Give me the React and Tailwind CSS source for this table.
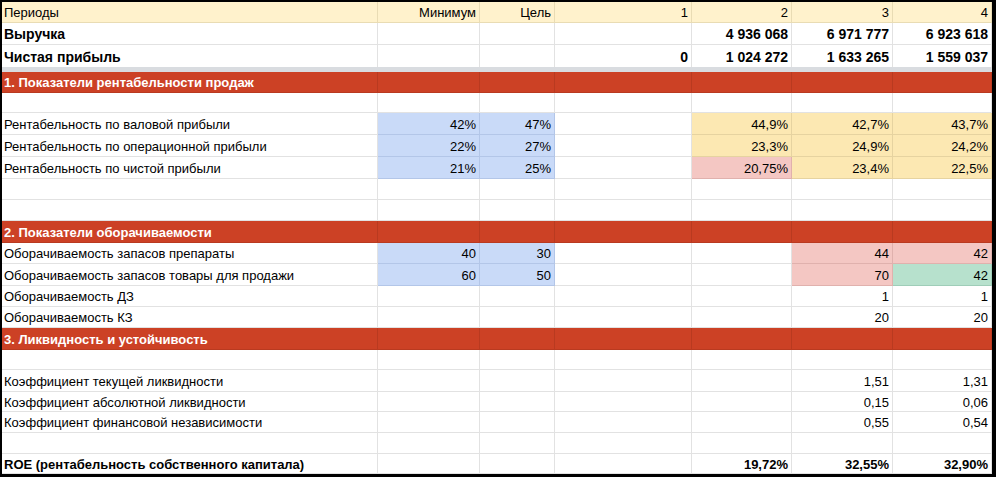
import React from "react";

const COLS = "grid-cols-[376px_102px_75px_137px_100px_101px_99px]";

// cell fill codes: b = blue target, y = yellow, r = pink (bad), g = green (good)
const FILL = {
  b: "bg-[#c9daf8] border-[#b3c6e8]",
  y: "bg-[#fce8b2] border-[#e6d3a0]",
  r: "bg-[#f4c7c3] border-[#e0b1ad]",
  g: "bg-[#b7e1cd] border-[#9fcdb8]",
};

const sheet = [
  { kind: "section", h: 21, title: "1. Показатели рентабельности продаж" },
  { kind: "data", h: 20, cells: ["", "", "", "", "", "", ""] },
  { kind: "data", h: 22, cells: ["Рентабельность по валовой прибыли", "42%", "47%", "", "44,9%", "42,7%", "43,7%"], fill: ["", "b", "b", "", "y", "y", "y"] },
  { kind: "data", h: 22, cells: ["Рентабельность по операционной прибыли", "22%", "27%", "", "23,3%", "24,9%", "24,2%"], fill: ["", "b", "b", "", "y", "y", "y"] },
  { kind: "data", h: 22, cells: ["Рентабельность по чистой прибыли", "21%", "25%", "", "20,75%", "23,4%", "22,5%"], fill: ["", "b", "b", "", "r", "y", "y"] },
  { kind: "data", h: 21, cells: ["", "", "", "", "", "", ""] },
  { kind: "data", h: 21, cells: ["", "", "", "", "", "", ""] },
  { kind: "section", h: 22, title: "2. Показатели оборачиваемости" },
  { kind: "data", h: 21, cells: ["Оборачиваемость запасов препараты", "40", "30", "", "", "44", "42"], fill: ["", "b", "b", "", "", "r", "r"] },
  { kind: "data", h: 22, cells: ["Оборачиваемость запасов товары для продажи", "60", "50", "", "", "70", "42"], fill: ["", "b", "b", "", "", "r", "g"] },
  { kind: "data", h: 21, cells: ["Оборачиваемость ДЗ", "", "", "", "", "1", "1"] },
  { kind: "data", h: 21, cells: ["Оборачиваемость КЗ", "", "", "", "", "20", "20"] },
  { kind: "section", h: 22, title: "3. Ликвидность и устойчивость" },
  { kind: "data", h: 20, cells: ["", "", "", "", "", "", ""] },
  { kind: "data", h: 22, cells: ["Коэффициент текущей ликвидности", "", "", "", "", "1,51", "1,31"] },
  { kind: "data", h: 20, cells: ["Коэффициент абсолютной ликвидности", "", "", "", "", "0,15", "0,06"] },
  { kind: "data", h: 21, cells: ["Коэффициент финансовой независимости", "", "", "", "", "0,55", "0,54"] },
  { kind: "data", h: 21, cells: ["", "", "", "", "", "", ""] },
  { kind: "data", h: 20, bold: true, cells: ["ROE (рентабельность собственного капитала)", "", "", "", "19,72%", "32,55%", "32,90%"] },
];

function Row({ row }) {
  if (row.kind === "section") {
    return (
      <div className={`grid ${COLS}`} style={{ height: row.h }}>
        {[0, 1, 2, 3, 4, 5, 6].map((i) => (
          <div
            key={i}
            className="bg-[#cc4125] border-r border-b border-[#b93a20] flex items-center pl-[2px] pt-px text-white font-bold whitespace-nowrap"
          >
            {i === 0 ? row.title : ""}
          </div>
        ))}
      </div>
    );
  }
  return (
    <div className={`grid ${COLS}`} style={{ height: row.h }}>
      {row.cells.map((c, i) => {
        const f = row.fill && row.fill[i] ? FILL[row.fill[i]] : "bg-white border-[#e2e2e2]";
        return (
          <div
            key={i}
            className={`${f} border-r border-b flex items-center pt-px whitespace-nowrap ${
              i === 0 ? "pl-[2px]" : "justify-end pr-[3px]"
            } ${row.bold ? "font-bold" : ""}`}
          >
            {c}
          </div>
        );
      })}
    </div>
  );
}

export default function App() {
  return (
    <div className="w-[996px] h-[477px] bg-black pt-[2px] pl-[2px] pr-[4px] pb-[3px] overflow-hidden font-['Liberation_Sans',Arial,sans-serif] text-[13px] text-black leading-none">
      <div className="bg-white h-full overflow-hidden">
        {/* header */}
        <div className={`grid ${COLS} h-[21px]`}>
          {["Периоды", "Минимум", "Цель", "1", "2", "3", "4"].map((c, i) => (
            <div
              key={i}
              className={`bg-[#fff2cc] border-r border-b border-[#e9dcb4] flex items-center pt-px ${
                i === 0 ? "pl-[2px]" : "justify-end pr-[3px]"
              }`}
            >
              {c}
            </div>
          ))}
        </div>
        <div className={`grid ${COLS} h-[22px]`}>
          {["Выручка", "", "", "", "4 936 068", "6 971 777", "6 923 618"].map((c, i) => (
            <div
              key={i}
              className={`border-r border-b border-[#e2e2e2] flex items-center pt-px font-bold text-[14px] ${
                i === 0 ? "pl-[2px]" : "justify-end pr-[3px]"
              }`}
            >
              {c}
            </div>
          ))}
        </div>
        <div className={`grid ${COLS} h-[22px]`}>
          {["Чистая прибыль", "", "", "0", "1 024 272", "1 633 265", "1 559 037"].map((c, i) => (
            <div
              key={i}
              className={`border-r border-[#e2e2e2] flex items-center pt-px font-bold text-[14px] ${
                i === 0 ? "pl-[2px]" : "justify-end pr-[3px]"
              }`}
            >
              {c}
            </div>
          ))}
        </div>
        <div className="h-[5px] bg-[#d9dce0]" />
        {sheet.map((row, i) => (
          <Row key={i} row={row} />
        ))}
      </div>
    </div>
  );
}
